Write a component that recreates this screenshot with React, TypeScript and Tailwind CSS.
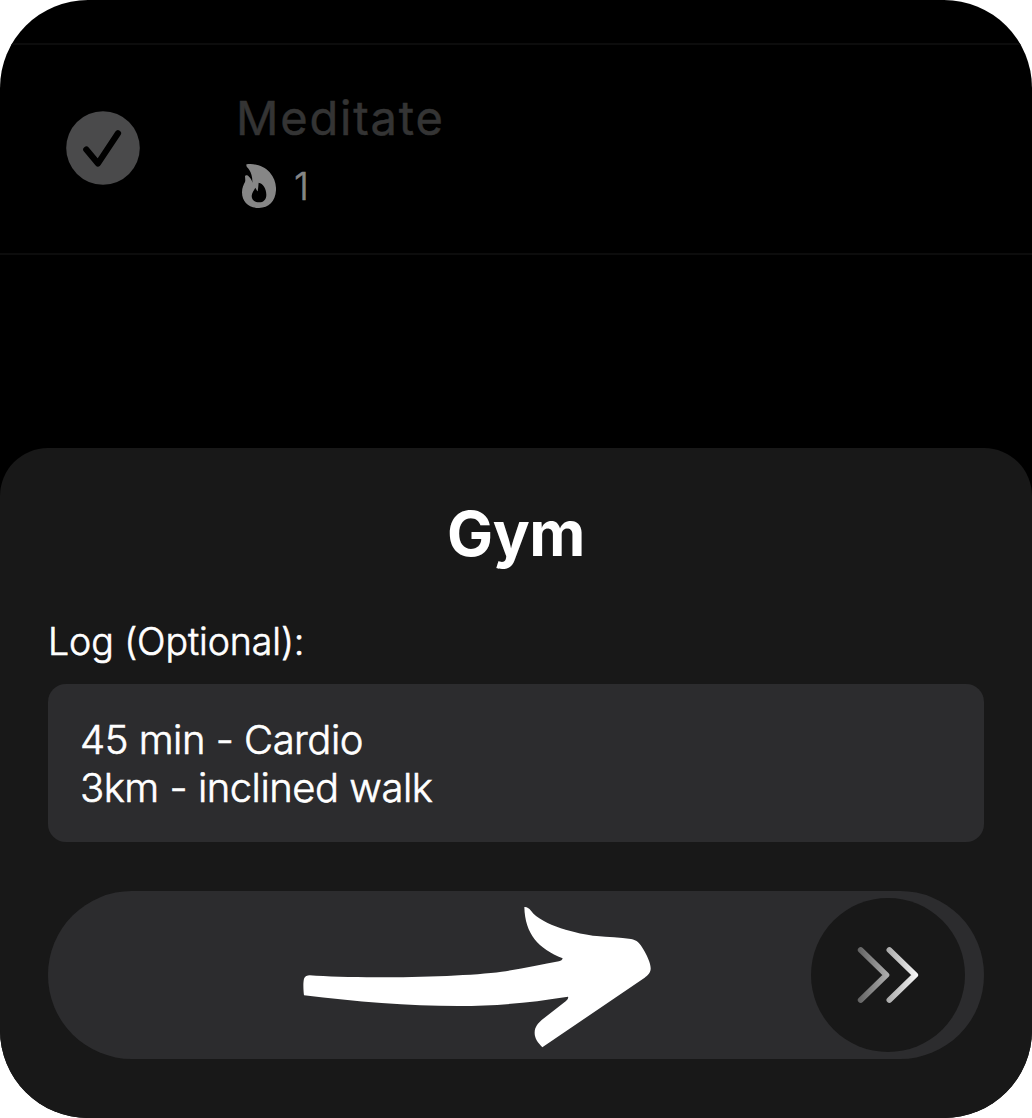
function CheckBadge() {
  return (
    <svg className="h-[74px] w-[74px] shrink-0" viewBox="0 0 74 74" fill="none">
      <circle cx="37" cy="37" r="36.8" fill="#4a4a4b" />
      <path d="M20.3 38.6 L32 52.4 L52 22.3" stroke="#000" strokeWidth="6.2" strokeLinecap="round" strokeLinejoin="round" />
    </svg>
  );
}

function Flame() {
  return (
    <svg className="h-[44px] w-[34px]" viewBox="52 237 102 132">
      <path
        fill="#868686"
        fillRule="evenodd"
        d="M66 238 C91 234 119 244 135 262 C150 279 155 300 154 316 C152 350 132 369 103 369 C73 369 52 352 52 322 C52 308 57 299 61 291 C63 285 61 279 61 274 C62 269 69 271 73 275 C78 279 82 286 83 293 C84 279 80 264 74 255 C70 249 65 246 65 241 C65 239 65 238 66 238 Z M102 293 C101 299 101 308 99 319 C97 318 95 313 92 308 C88 316 81 324 81 333 C81 345 90 352 103 352 C117 352 125 343 125 329 C125 311 115 295 102 293 Z"
      />
    </svg>
  );
}

function Arrow() {
  return (
    <svg className="absolute top-[-1px] left-[247px] h-[170px] w-[370px]" viewBox="0 0 1110 510">
      <path
        fill="#fff"
        d="M688 51 C695 50 701 54 708 62 C739 105 850 133 905 138 C940 141 975 143 1008 147 C1025 149 1036 162 1044 176 C1055 195 1068 219 1067 237 C1066 249 1058 256 1049 263 L742 472 C728 458 718 444 719 427 C719 411 730 399 740 390 L813 333 C818 328 821 324 819 320 C700 339 600 348 490 348 C340 348 180 335 27 316 C25 301 24 278 27 266 C30 258 37 256 44 256 C180 267 500 262 620 245 C680 237 740 223 792 214 C798 213 802 209 803 205 C730 176 690 132 688 51 Z"
      />
    </svg>
  );
}

function Chevrons() {
  return (
    <svg className="h-[58px] w-[62px]" viewBox="0 0 62 58" fill="none">
      <defs>
        <linearGradient id="fade" x1="0" y1="0" x2="62" y2="0" gradientUnits="userSpaceOnUse">
          <stop offset="0" stopColor="#606060" />
          <stop offset="1" stopColor="#fafafa" />
        </linearGradient>
      </defs>
      <path d="M3.7 4 L29.4 29 L3.7 54 M32.4 4 L58.2 29 L32.4 54" stroke="url(#fade)" strokeWidth="5.8" strokeLinecap="round" strokeLinejoin="round" />
    </svg>
  );
}

export default function App() {
  return (
    <div className="h-[1118px] w-[1032px] bg-white">
      <main className="flex h-full w-full flex-col overflow-hidden rounded-[88px] bg-black font-['Inter',sans-serif] antialiased">
        <div className="h-[45px] shrink-0 border-b-2 border-[#0c0c0c]" />
        <section className="flex h-[210px] shrink-0 items-start border-b-2 border-[#0c0c0c] pl-[66px]">
          <div className="pt-[66px]">
            <CheckBadge />
          </div>
          <div className="ml-[96px] pt-[45px]">
            <h2 className="text-[47px] leading-[56px] tracking-[1.8px] text-[#343434] [-webkit-text-stroke:0.5px_#343434]">Meditate</h2>
            <div className="flex items-start pt-[18px] pl-[6px]">
              <Flame />
              <span className="ml-[18px] text-[38px] leading-[44px] font-light text-[#868686] [-webkit-text-stroke:0.6px_#868686]">1</span>
            </div>
          </div>
        </section>
        <section className="mt-[193px] flex flex-1 flex-col rounded-t-[48px] bg-[#181818] px-12">
          <h1 className="pt-[49px] text-center text-[61.5px] leading-[74px] font-bold tracking-[-0.4px] text-white">Gym</h1>
          <label className="mt-[48px] text-[37.5px] leading-[46px] font-light tracking-[-0.1px] text-white [-webkit-text-stroke:0.6px_#fff]">Log (Optional):</label>
          <div className="mt-[19px] h-[158px] rounded-[18px] bg-[#2c2c2e] px-8 pt-[32px] text-[40px] leading-[48px] font-light tracking-[-0.5px] text-white [-webkit-text-stroke:0.6px_#fff]">
            <p>45 min - Cardio</p>
            <p>3km - inclined walk</p>
          </div>
          <div className="relative mt-[49px] flex h-[168px] items-center justify-end rounded-[84px] bg-[#2c2c2e] pr-[19px]">
            <Arrow />
            <div className="flex h-[154px] w-[154px] items-center justify-center rounded-full bg-[#181818]">
              <Chevrons />
            </div>
          </div>
        </section>
      </main>
    </div>
  );
}
